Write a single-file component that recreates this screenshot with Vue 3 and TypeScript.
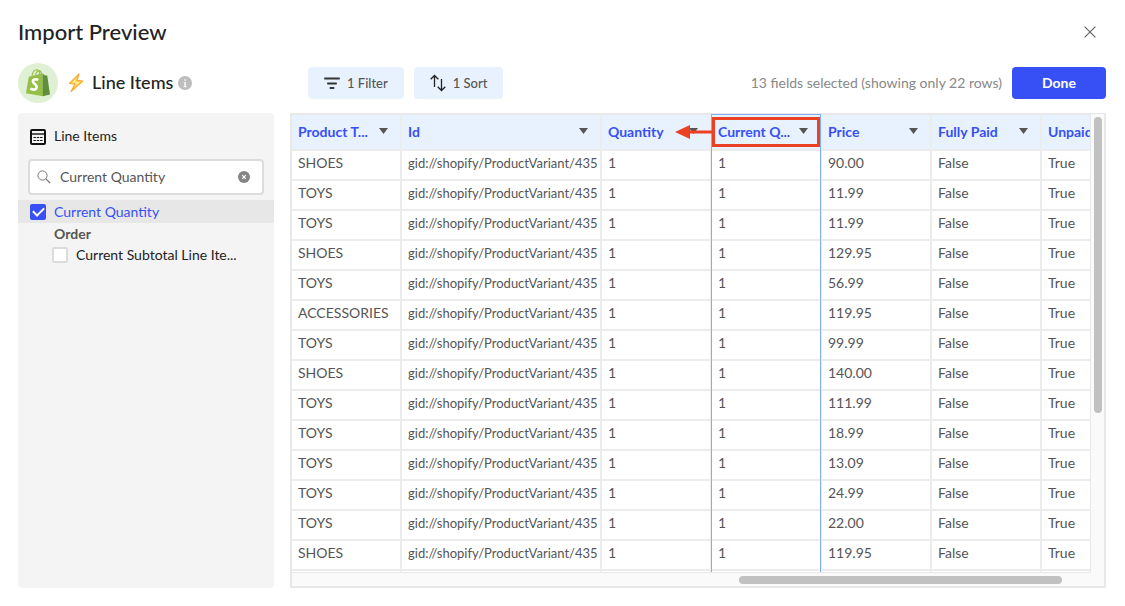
<script setup lang="ts">
import { ref } from 'vue'

interface Column {
  key: string
  label: string
  size: 'normal' | 'wide'
  highlighted?: boolean
}

interface Row {
  type: string
  price: string
}

const columns: Column[] = [
  { key: 'type', label: 'Product T...', size: 'normal' },
  { key: 'id', label: 'Id', size: 'wide' },
  { key: 'quantity', label: 'Quantity', size: 'normal' },
  { key: 'current', label: 'Current Q...', size: 'normal', highlighted: true },
  { key: 'price', label: 'Price', size: 'normal' },
  { key: 'paid', label: 'Fully Paid', size: 'normal' },
  { key: 'unpaid', label: 'Unpaid', size: 'normal' },
]

const rows: Row[] = [
  { type: 'SHOES', price: '90.00' },
  { type: 'TOYS', price: '11.99' },
  { type: 'TOYS', price: '11.99' },
  { type: 'SHOES', price: '129.95' },
  { type: 'TOYS', price: '56.99' },
  { type: 'ACCESSORIES', price: '119.95' },
  { type: 'TOYS', price: '99.99' },
  { type: 'SHOES', price: '140.00' },
  { type: 'TOYS', price: '111.99' },
  { type: 'TOYS', price: '18.99' },
  { type: 'TOYS', price: '13.09' },
  { type: 'TOYS', price: '24.99' },
  { type: 'TOYS', price: '22.00' },
  { type: 'SHOES', price: '119.95' },
]

const search = ref('Current Quantity')
const quantityOn = ref(true)
const subtotalOn = ref(false)
</script>

<template>
  <main class="dialog">
    <header class="title-bar">
      <h1>Import Preview</h1>
      <button class="close" type="button" aria-label="Close">
        <svg width="12" height="12" viewBox="0 0 12 12"><path d="M.6.6l10.800 10.800M11.400.6.6 11.400" stroke="#666" stroke-width="1.2" fill="none" /></svg>
      </button>
    </header>

    <div class="toolbar">
      <div class="source">
        <svg class="logo" width="40" height="40" viewBox="0 0 40 40">
          <circle cx="20" cy="20" r="20" fill="#dff0d5" />
          <path d="M14 13c.6-3.600 2.600-6.200 4.600-6.200 1.800 0 2.900 1.800 3.100 5M17.500 12c.6-2.700 1.900-4.400 3.500-4.400 1.400 0 2.200 1.300 2.500 3.600" fill="none" stroke="#95bf47" stroke-width="1.100" />
          <path d="M10.800 13.700 24.600 10.300 25 33.300 8 30.300z" fill="#95bf47" />
          <path d="M24.600 10.300 26.500 12.300 29.200 12.600 32 31.400 24.800 33.300z" fill="#5e8e3e" />
          <path d="M20.300 16.900c-1-.5-2-.7-2.900-.6-1.600.1-2.600 1-2.500 2.200.1 2.100 3.500 2.600 3.700 5.200.1 1.900-1.200 3-3 3-1.400 0-2.500-.6-3.100-1.300" fill="none" stroke="#fff" stroke-width="2.700" />
        </svg>
        <svg class="bolt" width="16" height="20" viewBox="0 0 16 20">
          <path d="M11 1 1.500 10.500 6.800 11.200 3 18.500 14.800 8 9 7.300z" fill="#ffd34d" stroke="#f9ab35" stroke-width="1.200" stroke-linejoin="round" />
          <path d="M8.700 4.500 4.500 9.300 9 9.800 6.500 13.500 11.500 9.300 7 8.600z" fill="#fff3b0" />
        </svg>
        <h2>Line Items</h2>
        <svg class="info" width="14" height="14" viewBox="0 0 14 14">
          <circle cx="7" cy="7" r="7" fill="#bdbdbd" />
          <path d="M6.200 3.200h1.800v1.600H6.200zM5.700 6H8v4.200h.8v1H5.400v-1h.8V7h-.5z" fill="#f1f1f1" />
        </svg>
      </div>
      <div class="tools">
        <button class="chip" type="button">
          <svg width="16" height="14" viewBox="0 0 16 14"><path d="M1 2.500h14M4 7.500h8M6.500 12h3" stroke="#333" stroke-width="2" stroke-linecap="round" /></svg>
          <span>1 Filter</span>
        </button>
        <button class="chip" type="button">
          <svg width="16" height="18" viewBox="0 0 16 18"><path d="M4.500 13V1.500M.7 5.300l3.800-3.800 3.800 3.800M11.500 5v11.500M7.700 12.700l3.800 3.800 3.800-3.800" fill="none" stroke="#222" stroke-width="1.300" /></svg>
          <span>1 Sort</span>
        </button>
        <p class="summary">13 fields selected (showing only 22 rows)</p>
        <button class="done" type="button">Done</button>
      </div>
    </div>

    <div class="content">
      <aside class="sidebar">
        <h3>
          <svg width="16" height="16" viewBox="0 0 16 16">
            <rect x="1" y="1" width="14" height="14" rx="1" fill="none" stroke="#111" stroke-width="2" />
            <path d="M1 5h14" stroke="#111" stroke-width="1.400" />
            <path d="M3.500 8.500h9M3.500 11.500h9" stroke="#111" stroke-width="1.200" stroke-dasharray="2.400 .9" />
          </svg>
          <span>Line Items</span>
        </h3>
        <div class="search">
          <svg width="14" height="14" viewBox="0 0 14 14"><circle cx="5.500" cy="5.500" r="4.600" fill="none" stroke="#777" /><path d="M8.900 8.900 13 13" stroke="#777" stroke-width="1.300" /></svg>
          <input v-model="search" type="text" aria-label="Search fields" />
          <button type="button" aria-label="Clear search" @click="search = ''">
            <svg width="12" height="12" viewBox="0 0 12 12"><circle cx="6" cy="6" r="6" fill="#858585" /><path d="M4.200 4.200l3.600 3.600M7.800 4.200 4.200 7.800" stroke="#fff" stroke-width="1.200" /></svg>
          </button>
        </div>
        <label class="field selected">
          <input v-model="quantityOn" type="checkbox" />
          <span>Current Quantity</span>
        </label>
        <h4>Order</h4>
        <label class="field nested">
          <input v-model="subtotalOn" type="checkbox" />
          <span>Current Subtotal Line Ite...</span>
        </label>
      </aside>

      <section class="grid">
        <div class="viewport">
          <table>
            <colgroup>
              <col v-for="c in columns" :key="c.key" :class="c.size" />
            </colgroup>
            <thead>
              <tr>
                <th v-for="c in columns" :key="c.key" :class="{ highlighted: c.highlighted }" scope="col">
                  <div class="head">
                    <span>{{ c.label }}</span>
                    <svg width="9" height="6" viewBox="0 0 9 6"><path d="M0 0h9L4.500 6z" fill="#555" /></svg>
                  </div>
                  <div v-if="c.highlighted" class="callout">
                    <svg width="40" height="16" viewBox="0 0 40 16"><path d="M0 8 15 1v5.500h25v3H15V15z" fill="#ec4025" /></svg>
                  </div>
                </th>
              </tr>
            </thead>
            <tbody>
              <tr v-for="(r, i) in rows" :key="i">
                <td>{{ r.type }}</td>
                <td class="gid">gid://shopify/ProductVariant/435</td>
                <td>1</td>
                <td class="highlighted">1</td>
                <td>{{ r.price }}</td>
                <td>False</td>
                <td>True</td>
              </tr>
              <tr>
                <td v-for="c in columns" :key="c.key" :class="{ highlighted: c.highlighted }"></td>
              </tr>
            </tbody>
          </table>
        </div>
        <div class="track vertical"><div class="thumb"></div></div>
        <div class="track horizontal"><div class="thumb"></div></div>
      </section>
    </div>
  </main>
</template>

<style>
body {
  background: #fff;
}
</style>

<style scoped>
* {
  box-sizing: border-box;
}

.dialog {
  display: flex;
  flex-direction: column;
  height: 100vh;
  padding: 18px 19px 18px 18px;
  font-family: Lato, "Liberation Sans", sans-serif;
  font-size: 14px;
  color: #222;
}

h1,
h2,
h3,
h4,
p {
  margin: 0;
}

svg {
  display: block;
  flex: none;
}

button {
  padding: 0;
  border: 0;
  background: none;
  font: inherit;
  cursor: pointer;
}

.title-bar {
  display: flex;
  align-items: center;
  justify-content: space-between;
  height: 28px;
  padding-right: 10px;
}

h1 {
  font-size: 22px;
  line-height: 28px;
  font-weight: 500;
}

.toolbar {
  display: grid;
  grid-template-columns: 256px minmax(0, 1fr);
  gap: 16px;
  align-items: center;
  margin: 17px 0 10px;
}

.source,
.tools {
  display: flex;
  align-items: center;
}

.bolt {
  margin: 0 8px 0 10px;
}

h2 {
  padding-bottom: 2px;
  font-size: 18px;
  font-weight: 500;
}

.info {
  margin-left: 5px;
}

.tools {
  gap: 10px;
  padding-left: 18px;
}

.chip {
  display: flex;
  align-items: center;
  gap: 7px;
  height: 32px;
  padding: 0 16px;
  border-radius: 4px;
  background: #e8f2fe;
  color: #555;
  font-size: 13px;
  font-weight: 500;
}

.summary {
  margin-left: auto;
  padding-bottom: 2px;
  color: #888;
}

.done {
  width: 94px;
  height: 32px;
  padding-bottom: 2px;
  border-radius: 4px;
  background: #3750f5;
  color: #fff;
  font-weight: 700;
}

.content {
  display: grid;
  grid-template: minmax(0, 1fr) / 256px minmax(0, 1fr);
  gap: 16px;
  flex: 1;
  min-height: 0;
}

.sidebar {
  border-radius: 4px;
  background: #f4f4f4;
}

h3 {
  display: flex;
  align-items: center;
  gap: 8px;
  padding: 13px 12px 12px;
  font-size: 14px;
  line-height: 20px;
  font-weight: 400;
}

h3 span,
.field span {
  padding-bottom: 1px;
}

.search {
  display: flex;
  align-items: center;
  gap: 9px;
  height: 36px;
  margin: 0 10px 5px;
  padding: 0 12px 0 7px;
  border: 2px solid #dcdcdc;
  border-radius: 4px;
  background: #fff;
}

.search input {
  flex: 1;
  min-width: 0;
  padding: 0 0 2px;
  border: 0;
  outline: 0;
  background: none;
  font: inherit;
  color: #555;
}

.field {
  display: flex;
  align-items: center;
  gap: 8px;
  height: 23px;
  padding-left: 12px;
}

.field input {
  display: grid;
  place-items: center;
  appearance: none;
  width: 16px;
  height: 16px;
  margin: 0;
  border: 2px solid #dcdcdc;
  border-radius: 2px;
  background: #fff;
}

.field input:checked {
  border-color: #3750f5;
  background: #3750f5;
}

.field input:checked::before {
  content: "";
  width: 9px;
  height: 5px;
  border: solid #fff;
  border-width: 0 0 2px 2px;
  transform: translateY(-1px) rotate(-45deg);
}

.selected {
  background: #e7e7e7;
  color: #3750f5;
}

.nested {
  padding-left: 34px;
}

h4 {
  padding: 2px 0 0 36px;
  font-size: 14px;
  line-height: 18px;
  color: #555;
}

.grid {
  display: grid;
  grid-template: minmax(0, 1fr) 13px / minmax(0, 1fr) 13px;
  border: 2px solid #e8e8e8;
  border-top-width: 1px;
  background: #fafafa;
}

.viewport {
  overflow: hidden;
  border: solid #e8e8e8;
  border-width: 0 1px 1px 0;
}

table {
  width: 860px;
  table-layout: fixed;
  border-spacing: 0;
}

.normal {
  width: 110px;
}

.wide {
  width: 200px;
}

th,
td {
  position: relative;
  overflow: hidden;
  border: solid #ececec;
  border-width: 0 2px 2px 0;
  text-align: left;
  white-space: nowrap;
}

th {
  height: 37px;
  padding: 0 12px 2px 6px;
  border-top: 1px solid #e8e8e8;
  background: #e8f2fe;
  color: #3750f5;
}

.head {
  display: flex;
  align-items: center;
  justify-content: space-between;
}

td {
  height: 30px;
  padding: 0 6px 4px;
  line-height: 24px;
  background: #fff;
  color: #555;
}

.gid {
  padding-right: 0;
  font-size: 13px;
}

.highlighted {
  overflow: visible;
}

.highlighted::before {
  content: "";
  position: absolute;
  inset: 0 -1px -2px;
  border: solid #7fb0f8;
  border-width: 0 1px;
}

th.highlighted::before {
  top: -1px;
  border-top-width: 1px;
}

.callout {
  position: absolute;
  inset: 2px 0;
  border: 3px solid #ec4025;
}

.callout svg {
  position: absolute;
  top: 4px;
  right: 100%;
}

.track {
  display: flex;
}

.vertical {
  padding: 3px 2px 0 3px;
}

.vertical .thumb {
  width: 8px;
  height: 65%;
}

.horizontal {
  padding: 3px 29px 0 0;
  justify-content: flex-end;
}

.horizontal .thumb {
  width: 42%;
  height: 8px;
}

.thumb {
  border-radius: 4px;
  background: #c1c1c1;
}
</style>
